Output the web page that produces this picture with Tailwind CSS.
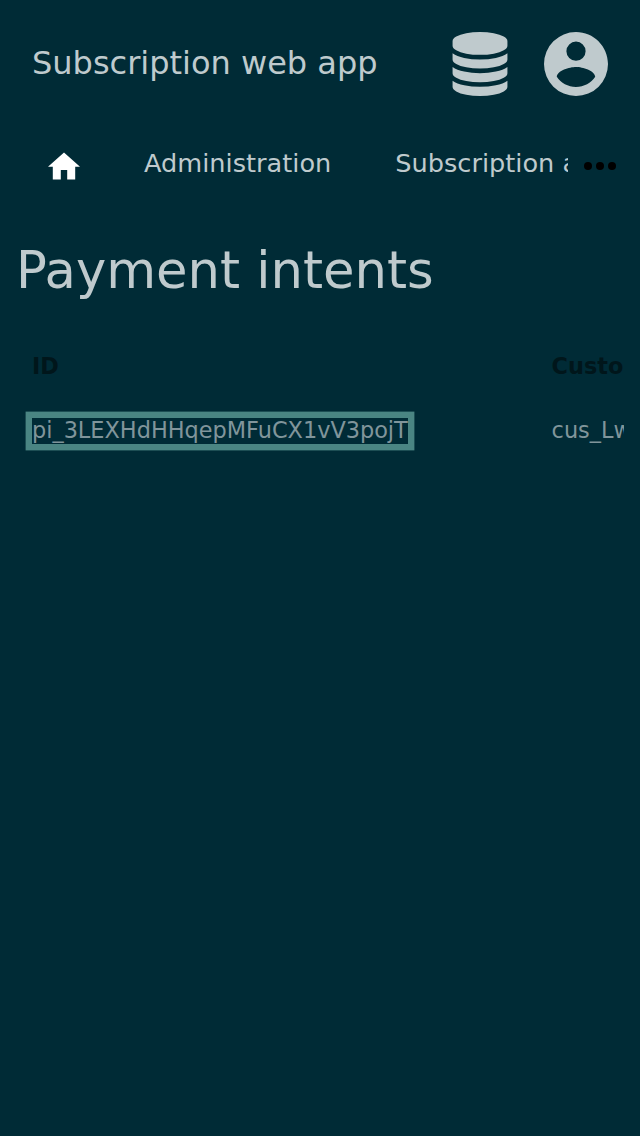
<!DOCTYPE html>
<html lang="en">
<head>
<meta charset="utf-8">
<title>Subscription web app</title>
<script src="https://cdn.jsdelivr.net/npm/@tailwindcss/browser@4"></script>
</head>
<body class="h-[1136px] overflow-hidden bg-[#002b36] font-['DejaVu_Sans',sans-serif] text-[#bfcacd]">
<header class="flex h-32 items-center px-8">
  <h1 class="flex-1 whitespace-nowrap pb-0.5 text-[32px] leading-[38px]">Subscription web app</h1>
  <div class="flex gap-8">
    <svg class="h-16 w-16" viewBox="-128 0 1792 1792" fill="currentColor"><path d="M768 768q237 0 443-43t325-127v170q0 69-103 128t-280 93.500-385 34.500-385-34.500-280-93.500-103-128v-170q119 84 325 127t443 43zm0 768q237 0 443-43t325-127v170q0 69-103 128t-280 93.500-385 34.500-385-34.500-280-93.500-103-128v-170q119 84 325 127t443 43zm0-384q237 0 443-43t325-127v170q0 69-103 128t-280 93.500-385 34.500-385-34.500-280-93.500-103-128v-170q119 84 325 127t443 43zm0-1152q208 0 385 34.500t280 93.500 103 128v128q0 69-103 128t-280 93.500-385 34.500-385-34.500-280-93.500-103-128v-128q0-69 103-128t280-93.500 385-34.500z"/></svg>
    <svg class="h-16 w-16" viewBox="2 2 20 20" fill="currentColor"><path d="M12,19.2C9.5,19.2 7.29,17.92 6,16C6.03,14 10,12.9 12,12.9C14,12.9 17.97,14 18,16C16.71,17.92 14.5,19.2 12,19.2M12,5A3,3 0 0,1 15,8A3,3 0 0,1 12,11A3,3 0 0,1 9,8A3,3 0 0,1 12,5M12,2A10,10 0 0,0 2,12A10,10 0 0,0 12,22A10,10 0 0,0 22,12C22,6.47 17.5,2 12,2Z"/></svg>
  </div>
</header>
<nav class="flex h-[72px] items-start">
  <div class="flex h-full w-[568px] overflow-hidden pl-12 text-[25.6px] leading-[30px]">
    <svg class="mt-6 h-7 w-8 shrink-0 text-white" viewBox="2 2.75 20 17.5" fill="currentColor"><path d="M10,20V14H14V20H19V12H22L12,3L2,12H5V20H10Z"/></svg>
    <a class="ml-16 mt-5 whitespace-nowrap">Administration</a>
    <a class="ml-16 mt-5 whitespace-nowrap">Subscription administration</a>
  </div>
  <svg class="ml-4 mt-[34px] h-2 w-8 text-black" viewBox="0 0 32 8" fill="currentColor"><circle cx="4" cy="4" r="4"/><circle cx="16" cy="4" r="4"/><circle cx="28" cy="4" r="4"/></svg>
</nav>
<main class="px-4 pt-10">
  <h2 class="whitespace-nowrap text-[51.2px] leading-[60px]">Payment intents</h2>
  <div class="mt-[35px] grid grid-cols-[519.600px_400px] overflow-hidden text-[22.4px] leading-[24px] text-[#80959b]">
    <div class="flex h-16 items-center px-4 pb-0.5 font-bold text-[#00161b]">ID</div>
    <div class="flex h-16 items-center px-4 pb-0.5 font-bold text-[#00161b]">Customer</div>
    <div class="flex h-16 items-center px-4"><a class="whitespace-nowrap pb-0.5 shadow-[0_0_0_6.4px_#4a8583]">pi_3LEXHdHHqepMFuCX1vV3pojT</a></div>
    <div class="flex h-16 items-center px-4 pb-0.5">cus_LwQ8Z2vT</div>
  </div>
</main>
</body>
</html>
